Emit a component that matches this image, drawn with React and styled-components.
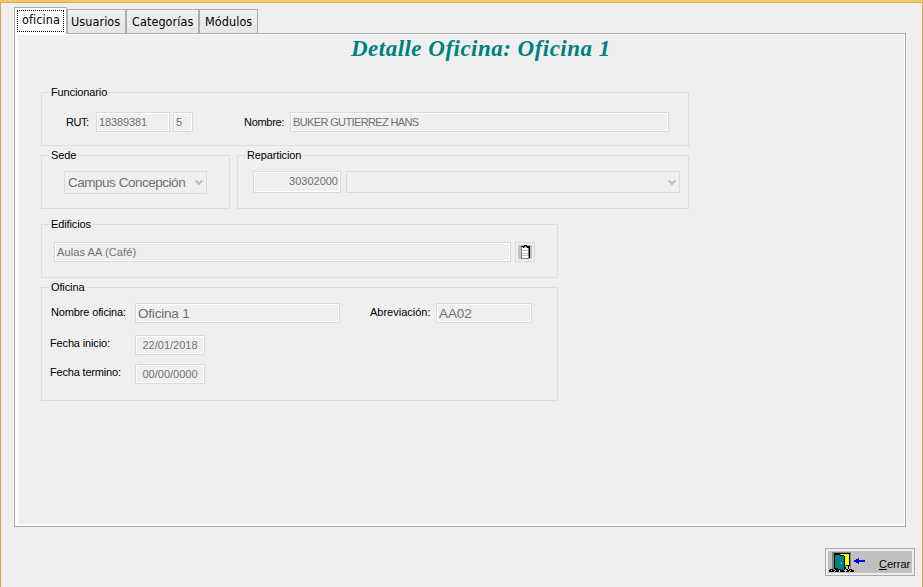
import React from "react";
import styled, { createGlobalStyle } from "styled-components";

const Global = createGlobalStyle`
  * { box-sizing: border-box; }
  html, body { margin: 0; padding: 0; background: #efefef; overflow: hidden; }
  body { font: 11px/14px "Liberation Sans", Arial, sans-serif; color: #000; }
`;

const Window = styled.div`
  width: 923px;
  height: 587px;
  background: #efefef;
  border: solid #d3a853;
  border-width: 0 1px;
  display: flex;
  flex-direction: column;
`;

const WindowEdge = styled.div`
  height: 3px;
  flex: none;
  margin: 0 -1px;
  background: #f1c76a;
  border-bottom: 1px solid #d5aa52;
`;

const TabBar = styled.div`
  display: flex;
  align-items: flex-end;
  height: 30px;
  padding: 4px 0 0 13px;
`;

const Tab = styled.button`
  width: ${(p) => p.$width}px;
  height: 24px;
  padding: 0 0 0 ${(p) => p.$indent}px;
  border: 1px solid #acacac;
  border-bottom: 0;
  background: linear-gradient(#f0f0f0, #e5e5e5);
  font: 12.5px/15px "DejaVu Sans Condensed", "DejaVu Sans", sans-serif;
  font-stretch: condensed;
  letter-spacing: 0.08px;
  color: #000;
  text-align: left;
  white-space: nowrap;
`;

const ActiveTab = styled(Tab)`
  height: 27px;
  margin-bottom: -1px;
  padding: 2px;
  background: #fff;
  z-index: 1;
`;

const FocusRing = styled.span`
  display: block;
  height: 22px;
  padding: 1px 0 0 4px;
  border: 1px dotted #000;
`;

const Panel = styled.main`
  width: 892px;
  height: 494px;
  margin-left: 13px;
  border: 1px solid #acacac;
  background: #efefef;
  box-shadow: inset 3px 0 #fff, inset -1px 0 #fff, inset 0 1px #fff, inset 0 -2px #fff;
  padding-left: 26px;
`;

const Title = styled.h1`
  margin: 0 0 0 310px;
  height: 58px;
  padding-top: 1px;
  font: italic bold 23px/28px "Liberation Serif", "Times New Roman", serif;
  letter-spacing: 0.48px;
  color: #008080;
  white-space: nowrap;
`;

const Form = styled.form`
  display: flex;
  flex-direction: column;
  align-items: flex-start;
`;

const GroupLine = styled.div`
  display: flex;
  gap: 7px;
`;

const Group = styled.section`
  width: ${(p) => p.$width}px;
  height: ${(p) => p.$height}px;
  margin-bottom: ${(p) => p.$after || 0}px;
  border: 1px solid #dcdcdc;
`;

const Legend = styled.h2`
  width: fit-content;
  height: 14px;
  margin: -8px 0 0 7px;
  padding: 0 2px;
  background: #efefef;
  font: inherit;
  letter-spacing: -0.12px;
`;

const Row = styled.div`
  display: flex;
  align-items: center;
  height: ${(p) => p.$height || 20}px;
  margin: ${(p) => p.$top}px 0 0 ${(p) => p.$left}px;
`;

const Label = styled.label`
  width: ${(p) => p.$width}px;
  flex: none;
  margin-left: ${(p) => p.$before || 0}px;
  padding-bottom: ${(p) => p.$raise || 0}px;
  letter-spacing: ${(p) => p.$spacing || 0}px;
  white-space: nowrap;
`;

const Field = styled.div`
  width: ${(p) => p.$width}px;
  height: ${(p) => p.$height || 20}px;
  flex: none;
  margin-left: ${(p) => p.$before || 0}px;
  padding: 0 2px;
  border: 1px solid #dadada;
  box-shadow: inset 0 0 0 1px #fff;
  color: #707070;
  font-size: ${(p) => (p.$large ? 13.5 : 11)}px;
  line-height: ${(p) => (p.$large ? 19 : 18)}px;
  letter-spacing: ${(p) => p.$spacing || 0}px;
  text-align: ${(p) => p.$align || "left"};
  white-space: nowrap;
`;

const Select = styled(Field)`
  display: flex;
  justify-content: space-between;
  align-items: center;
  box-shadow: none;
  padding: 0 3px;
  svg { flex: none; }
`;

const IconButton = styled.button`
  width: 20px;
  height: 20px;
  margin-left: 4px;
  padding: 2px;
  border: 1px solid #dadada;
  background: #efefef;
  svg { display: block; }
`;

const Footer = styled.footer`
  display: flex;
  justify-content: flex-end;
  padding: 21px 7px 0 0;
`;

const CloseButton = styled.button`
  width: 90px;
  height: 28px;
  padding: 2px;
  border: 1px solid #acacac;
  background: #efefef;
  color: #000;
  font: 11px/14px "Liberation Sans", Arial, sans-serif;
`;

const CloseFace = styled.span`
  display: flex;
  height: 22px;
  background: #c0c0c0;
  svg { flex: none; }
`;

const CloseText = styled.span`
  margin: 6px 0 0 13px;
`;

const Chevron = () => (
  <svg width="8" height="7" viewBox="0 0 8 7" fill="none" stroke="#bdbdbd" strokeWidth="2">
    <path d="M.7 1.4 4 5 7.3 1.4" />
  </svg>
);

const Clipboard = () => (
  <svg width="14" height="14" viewBox="0 0 14 14" shapeRendering="crispEdges">
    <path fill="#c0c0c0" d="M0 0h14v14H0z" />
    <path fill="#fff" d="M4 3h6v10H4z" />
    <path fill="#808080" d="M3 2h1v11H3zM3 13h8v1H3zM10 3h1v10h-1z" />
    <path fill="#000" d="M3 1h3V0h3v1h3v12h-1V3H9V2H8V1H7v1H6v1H5V2H3z" />
    <path fill="#c0c0c0" d="M4 5h6v1H4zM4 8h6v1H4zM4 10h6v1H4z" />
  </svg>
);

const DoorIcon = () => (
  <svg width="38" height="22" viewBox="0 0 38 22" shapeRendering="crispEdges">
    <path fill="#808080" d="M4 1h19v18H4z" />
    <path fill="#000" d="M6 2h16v1H6zM6 2h1v16H6zM21 3h1v12h-1z" />
    <path fill="#ffff00" d="M13 3h8v11h-4V5h-4z" />
    <path fill="#008080" d="M7 3h4v1h4v1h1v14h-4v-1H7z" />
    <path fill="#000" d="M7 3h5v1h4v1h1v14h-1V5h-4V4H7zM7 17h3v1h3v1h3v1h-4v-1H7z" />
    <path fill="#00e0e0" d="M13 11h1v2h-1z" />
    <path fill="#c0c0c0" d="M17 15h5v4h-5z" />
    <path fill="#000" d="M18 14h3v1h-3zM17 16h1v2h-1zM20 15h1v3h-1zM18 18h2v1h-2zM2 18h3v1H2zM21 18h3v1h-3zM1 19h2v1H1zM4 19h3v1H4zM8 19h3v1H8zM19 19h3v1h-3zM23 19h3v1h-3zM1 20h5v1H1zM7 20h4v1H7zM12 20h5v1h-5zM18 20h3v1h-3zM22 20h4v1h-4z" />
    <path fill="#0000ff" d="M30 7h1v2h6v2h-6v2h-1v-1h-2v-1h-2V9h2V8h2z" />
  </svg>
);

export default function App() {
  return (
    <>
      <Global />
      <Window>
        <WindowEdge />
        <TabBar>
          <ActiveTab $width={53}><FocusRing>oficina</FocusRing></ActiveTab>
          <Tab $width={59} $indent={3}>Usuarios</Tab>
          <Tab $width={73} $indent={5}>Categorías</Tab>
          <Tab $width={59} $indent={5}>Módulos</Tab>
        </TabBar>
        <Panel>
          <Title>Detalle Oficina: Oficina 1</Title>
          <Form>
            <Group $width={648} $height={54} $after={9}>
              <Legend>Funcionario</Legend>
              <Row $top={13} $left={24}>
                <Label $width={30} $spacing={-0.5}>RUT:</Label>
                <Field $width={74} $spacing={-0.12}>18389381</Field>
                <Field $width={20} $before={3}>5</Field>
                <Label $width={46} $before={51} $spacing={-0.3}>Nombre:</Label>
                <Field $width={379} $spacing={-0.63}>BUKER GUTIERREZ HANS</Field>
              </Row>
            </Group>
            <GroupLine>
              <Group $width={189} $height={54} $after={15}>
                <Legend>Sede</Legend>
                <Row $top={9} $left={22} $height={23}>
                  <Select $width={143} $height={23} $large $spacing={-0.48}>Campus Concepción<Chevron /></Select>
                </Row>
              </Group>
              <Group $width={452} $height={54} $after={15}>
                <Legend>Reparticion</Legend>
                <Row $top={9} $left={15} $height={22}>
                  <Field $width={88} $height={22} $align="right">30302000</Field>
                  <Select $width={334} $height={22} $before={5}><span /><Chevron /></Select>
                </Row>
              </Group>
            </GroupLine>
            <Group $width={517} $height={54} $after={9}>
              <Legend>Edificios</Legend>
              <Row $top={11} $left={12}>
                <Field $width={457} $spacing={0.1}>Aulas AA (Café)</Field>
                <IconButton type="button" aria-label="Edificios"><Clipboard /></IconButton>
              </Row>
            </Group>
            <Group $width={517} $height={114}>
              <Legend>Oficina</Legend>
              <Row $top={9} $left={9}>
                <Label $width={84} $raise={3} $spacing={-0.14}>Nombre oficina:</Label>
                <Field $width={205} $large $spacing={-0.2}>Oficina 1</Field>
                <Label $width={66} $before={30} $raise={3}>Abreviación:</Label>
                <Field $width={96} $large $spacing={-0.1}>AA02</Field>
              </Row>
              <Row $top={12} $left={8}>
                <Label $width={85} $raise={5} $spacing={-0.15}>Fecha inicio:</Label>
                <Field $width={70} $align="center">22/01/2018</Field>
              </Row>
              <Row $top={9} $left={8}>
                <Label $width={85} $raise={5} $spacing={-0.18}>Fecha termino:</Label>
                <Field $width={70} $align="center">00/00/0000</Field>
              </Row>
            </Group>
          </Form>
        </Panel>
        <Footer>
          <CloseButton type="button">
            <CloseFace><DoorIcon /><CloseText><u>C</u>errar</CloseText></CloseFace>
          </CloseButton>
        </Footer>
      </Window>
    </>
  );
}
